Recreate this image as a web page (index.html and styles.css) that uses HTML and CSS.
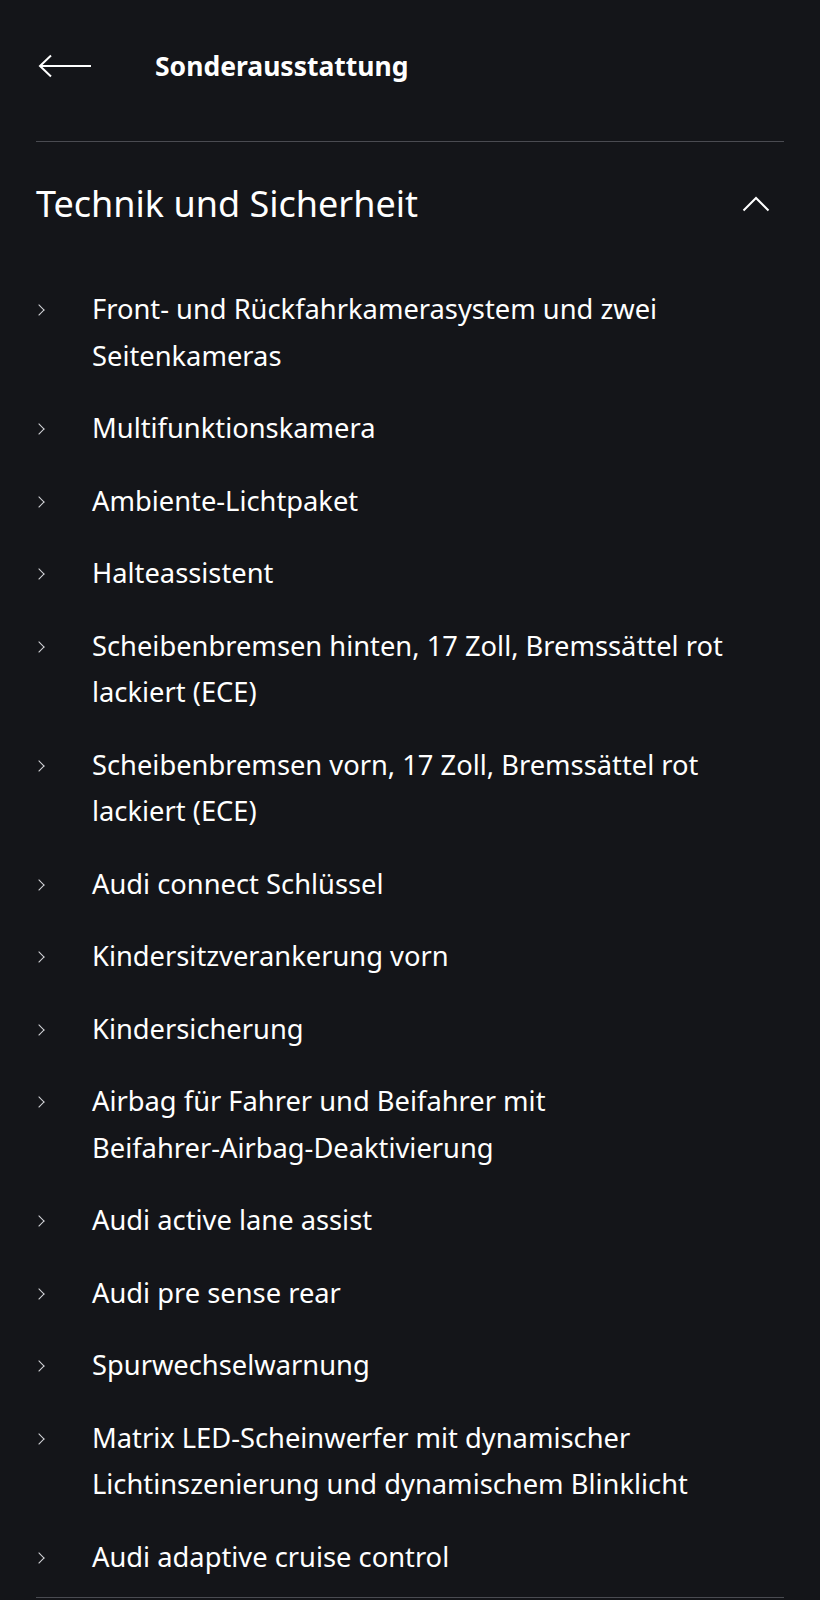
FILE: index.html
```html
<!DOCTYPE html>
<html lang="de">

<head>
  <meta charset="UTF-8" />
  <meta name="viewport" content="width=device-width, initial-scale=1.0" />
  <title>Sonderausstattung</title>
  <link rel="stylesheet" href="styles.css">
</head>

<body>
  <div class="page">

    <!-- TOP BAR -->
    <header class="topbar">
      <button class="back-btn" aria-label="Zurück">
        <svg width="56" height="24" viewBox="0 0 56 24">
          <path d="M15 1.5 L4 12 L15 22.5 M4 12 H55" fill="none" stroke="#fff" stroke-width="2" />
        </svg>
      </button>
      <h1 class="topbar-title">Sonderausstattung</h1>
    </header>

    <!-- ACCORDION: Technik und Sicherheit -->
    <section class="accordion">
      <div class="acc-head">
        <h2>Technik und Sicherheit</h2>
        <svg class="acc-toggle" width="28" height="16" viewBox="0 0 28 16">
          <path d="M1.5 14.5 L14 2 L26.5 14.5" fill="none" stroke="#fff" stroke-width="2" />
        </svg>
      </div>

      <ul class="acc-list">
        <li>Front- und Rückfahrkamerasystem und zwei Seitenkameras</li>
        <li>Multifunktionskamera</li>
        <li>Ambiente-Lichtpaket</li>
        <li>Halteassistent</li>
        <li>Scheibenbremsen hinten, 17 Zoll, Bremssättel rot lackiert (ECE)</li>
        <li>Scheibenbremsen vorn, 17 Zoll, Bremssättel rot lackiert (ECE)</li>
        <li>Audi connect Schlüssel</li>
        <li>Kindersitzverankerung vorn</li>
        <li>Kindersicherung</li>
        <li>Airbag für Fahrer und Beifahrer mit Beifahrer&#8209;Airbag&#8209;Deaktivierung</li>
        <li>Audi active lane assist</li>
        <li>Audi pre sense rear</li>
        <li>Spurwechselwarnung</li>
        <li>Matrix LED-Scheinwerfer mit dynamischer Lichtinszenierung und dynamischem Blinklicht</li>
        <li>Audi adaptive cruise control</li>
      </ul>
    </section>

  </div>
</body>

</html>
```

FILE: styles.css
```css
/* Base */
* {
  margin: 0;
  padding: 0;
  box-sizing: border-box;
}

html,
body {
  background-color: #141519;
  color: #fff;
  font-family: 'Noto Sans', 'Open Sans', sans-serif;
}

.page {
  padding: 0 36px;
}

/* Top bar */
.topbar {
  height: 142px;
  padding-bottom: 10px;
  display: flex;
  align-items: center;
  border-bottom: 1px solid #4a4b51;
}

.back-btn {
  display: flex;
  background: none;
  border: none;
  cursor: pointer;
  padding: 0;
}

.topbar-title {
  margin-left: 63px;
  font-size: 26.5px;
  font-weight: 700;
}

/* Accordion */
.accordion {
  border-bottom: 1px solid #4a4b51;
}

.acc-head {
  display: flex;
  align-items: center;
  justify-content: space-between;
  padding-top: 36px;
  height: 88px;
}

.acc-head h2 {
  font-size: 36px;
  font-weight: 400;
  line-height: 48px;
}

.acc-toggle {
  margin-right: 14px;
}

.acc-list {
  list-style: none;
  display: flex;
  flex-direction: column;
  gap: 26px;
  padding: 56px 0 17px;
}

.acc-list li {
  position: relative;
  padding-left: 56px;
  font-size: 27.3px;
  line-height: 46.5px;
}

/* small chevron bullet */
.acc-list li::before {
  content: "";
  position: absolute;
  left: -1px;
  top: 20px;
  width: 7px;
  height: 7px;
  border-top: 1.8px solid #d4d5d9;
  border-right: 1.8px solid #d4d5d9;
  transform: rotate(45deg);
}
```
